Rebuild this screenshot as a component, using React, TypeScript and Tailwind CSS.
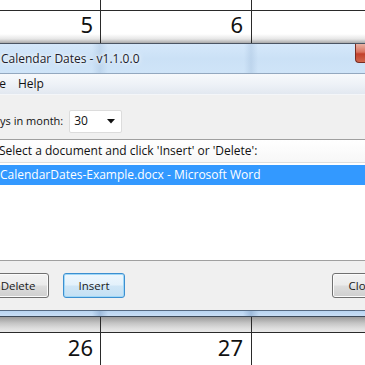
import React from "react";

const ui = { fontFamily: '"Open Sans", "Noto Sans", sans-serif' };
const num = { fontFamily: '"Noto Sans", "Open Sans", sans-serif' };

function CalRow({ a, b, cls, numCls }: { a: string; b: string; cls: string; numCls: string }) {
  return (
    <div className={"grid grid-cols-[101px_151px_1fr] " + cls}>
      <div className={"border-r border-[#2a2a2a] text-right pr-[7px] " + numCls} style={num}>
        {a}
      </div>
      <div className={"border-r border-[#2a2a2a] text-right pr-[8px] " + numCls} style={num}>
        {b}
      </div>
      <div />
    </div>
  );
}

function Btn({ label, focused, w }: { label: string; focused?: boolean; w: string }) {
  return (
    <div
      className={
        "h-[25px] shrink-0 rounded-[3px] border flex items-center justify-center text-[11.5px] text-[#1a1a1a] " +
        w +
        (focused
          ? " border-[#3c8fd0] shadow-[inset_0_0_0_1px_#9fd7f7] bg-[linear-gradient(to_bottom,#eef7fd_0%,#e3f1fb_48%,#cfe6f6_52%,#c4e0f4_100%)]"
          : " border-[#707070] shadow-[inset_0_0_0_1px_#fbfbfb] bg-[linear-gradient(to_bottom,#f3f3f3_0%,#ebebeb_48%,#dddddd_52%,#cfcfcf_100%)]")
      }
      style={ui}
    >
      {label}
    </div>
  );
}

export default function App() {
  return (
    <div className="w-[365px] h-[365px] overflow-hidden bg-white flex flex-col">
      {/* top calendar */}
      <CalRow a="" b="" cls="h-[11px] border-b border-[#2a2a2a]" numCls="" />
      <CalRow
        a="5"
        b="6"
        cls="h-[32px] bg-[linear-gradient(to_bottom,#ffffff_0px,#ffffff_23px,#e6e6e6_28px,#a9a9a9_32px)]"
        numCls="text-[22px] leading-none pt-[2px] text-[#111]"
      />

      {/* window */}
      <div className="flex flex-col border-t border-[#4b5563]">
        {/* title bar */}
        <div className="h-[30px] flex justify-between items-start border-b border-[#93a8bf] bg-[linear-gradient(90deg,rgba(170,196,224,0)_92px,rgba(170,196,224,0.45)_100px,rgba(170,196,224,0)_108px,rgba(170,196,224,0)_244px,rgba(170,196,224,0.45)_251px,rgba(170,196,224,0)_258px),linear-gradient(to_bottom,#d5e8fa_0%,#cbe1f6_50%,#cfe4f8_100%)]">
          <div
            className="pl-[1px] pt-[6px] text-[12px] leading-[18px] text-[#1c1c2a] [text-shadow:0_0_6px_#ffffff,0_0_3px_#ffffff]"
            style={ui}
          >
            Calendar Dates - v1.1.0.0
          </div>
          <div className="w-[10px] h-[19px] rounded-bl-[4px] border-l border-b border-[#7a2d22] bg-[linear-gradient(to_bottom,#eab2a4_0%,#d9735f_45%,#c2402b_55%,#d0664c_100%)]" />
        </div>

        {/* menu bar */}
        <div
          className="h-[21px] flex items-center gap-[12px] text-[12px] text-[#111] border-b border-[#f4f6f9] bg-[linear-gradient(to_bottom,#f7f9fc_0%,#eef2f7_50%,#e2e8f0_100%)]"
          style={ui}
        >
          <span className="-ml-[13px]">File</span>
          <span>Help</span>
        </div>

        {/* days row */}
        <div className="h-[44px] pt-[8px] bg-[#f0f0f0] flex items-center gap-[6px] text-[11px] text-[#111]" style={ui}>
          <span className="-ml-[14px]">Days in month:</span>
          <div className="w-[53px] h-[23px] bg-white border border-[#dcdcdc] rounded-[2px] flex items-center justify-between pl-[4px] pr-[6px] text-[12px]">
            <span>30</span>
            <svg width="8" height="5" viewBox="0 0 8 5">
              <path d="M0 0 H8 L4 4.5 Z" fill="#111" />
            </svg>
          </div>
        </div>

        {/* list area */}
        <div className="border-t border-[#9f9f9f] bg-white flex flex-col">
          <div
            className="h-[23px] flex items-center text-[12px] text-[#111] -ml-[1px] bg-[linear-gradient(to_bottom,#ffffff,#f7f7f7)] border-b border-[#dedede]"
            style={ui}
          >
            Select a document and click 'Insert' or 'Delete':
          </div>
          <div className="h-[2px]" />
          <div className="h-[20px] bg-[#3399ff] text-white flex items-center text-[12px]" style={ui}>
            CalendarDates-Example.docx - Microsoft Word
          </div>
          <div className="h-[75px]" />
        </div>

        {/* buttons */}
        <div className="h-[50px] border-t border-[#a0a0a0] bg-[#f0f0f0] flex items-center">
          <div className="-ml-[13px] flex items-center gap-[14px]">
            <Btn label="Delete" w="w-[62px]" />
            <Btn label="Insert" focused w="w-[62px]" />
          </div>
          <div className="ml-[207px]">
            <Btn label="Close" w="w-[62px]" />
          </div>
        </div>

        {/* bottom frame */}
        <div className="border-t border-[#566a82]" />
        <div className="h-[5px] bg-[linear-gradient(90deg,rgba(150,180,214,0)_92px,rgba(150,180,214,0.8)_100px,rgba(150,180,214,0)_108px,rgba(150,180,214,0)_243px,rgba(150,180,214,0.8)_251px,rgba(150,180,214,0)_259px),linear-gradient(to_bottom,#b9d5f2,#c8def5)]" />
        <div className="border-t border-[#3d4a5a]" />
      </div>

      {/* bottom calendar */}
      <CalRow
        a=""
        b=""
        cls="h-[16px] border-b border-[#2a2a2a] bg-[linear-gradient(to_bottom,#9a9a9a_0%,#c4c4c4_40%,#dedede_75%,#e9e9e9_100%)]"
        numCls=""
      />
      <CalRow a="26" b="27" cls="flex-1" numCls="text-[22px] leading-none pt-[3px] text-[#111]" />
    </div>
  );
}
